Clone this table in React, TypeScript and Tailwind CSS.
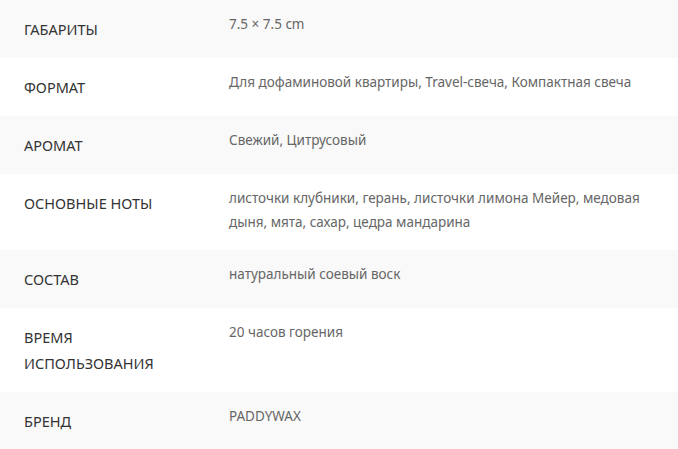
const rows = [
  { label: "Габариты", value: "7.5 × 7.5 cm" },
  { label: "Формат", value: "Для дофаминовой квартиры, Travel-свеча, Компактная свеча" },
  { label: "Аромат", value: "Свежий, Цитрусовый" },
  {
    label: "Основные ноты",
    value: "листочки клубники, герань, листочки лимона Мейер, медовая дыня, мята, сахар, цедра мандарина",
  },
  { label: "Состав", value: "натуральный соевый воск" },
  { label: "Время использования", value: "20 часов горения" },
  { label: "Бренд", value: "PADDYWAX" },
];

export default function App() {
  return (
    <div className="w-[678px] bg-white" style={{ fontFamily: '"Noto Sans", "Open Sans", sans-serif' }}>
      {rows.map((row, i) => (
        <div key={i} className={`grid grid-cols-[229px_1fr] items-start ${i % 2 === 0 ? "bg-[#f9f9f9]" : "bg-white"}`}>
          <div className="pl-6 pr-8 py-4 text-[14.5px] leading-[26px] uppercase text-[#333]">{row.label}</div>
          <div className="pt-3 pb-4 pr-8 text-[13.5px] leading-6 text-[#666]">{row.value}</div>
        </div>
      ))}
    </div>
  );
}
